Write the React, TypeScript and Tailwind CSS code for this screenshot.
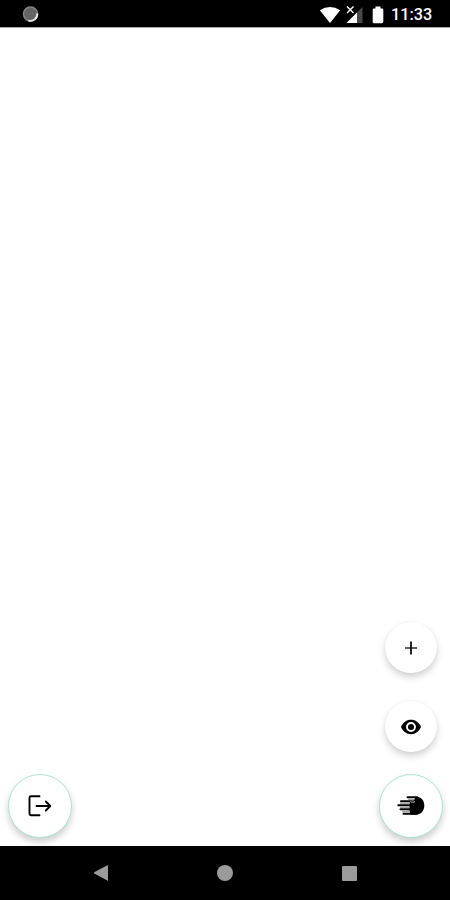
import type { ReactNode } from 'react';

function StatusBar() {
  return (
    <header className="flex h-[27px] shrink-0 items-center justify-between bg-black pr-[17px] pl-[22px]">
      <svg className="mt-[2px] h-[17px] w-[17px]" viewBox="0 0 17 17" aria-hidden="true">
        <circle cx="8.5" cy="8" r="7" fill="#646464" stroke="#858585" strokeWidth="1.5" />
        <path d="M15.3 7.5a7 7 0 0 1-8.8 7.2" fill="none" stroke="#ededed" strokeWidth="1.8" />
      </svg>
      <div className="mt-[2px] flex items-center text-white">
        <svg className="h-[18px] w-[22px]" viewBox="0 0 22 18" aria-hidden="true">
          <path d="M.8 4.3Q11-2.3 21.2 4.3L11 17Z" fill="currentColor" />
        </svg>
        <svg className="ml-[5px] h-[18px] w-[17px]" viewBox="0 0 17 18" aria-hidden="true">
          <path d="M.5 17 16.5 1v16Z" fill="#484848" />
          <path d="M.5 17 11 6.5V17Z" fill="currentColor" />
          <path d="m1 .5 6.5 6.5M7.5.5 1 7" stroke="currentColor" strokeWidth="1.4" />
        </svg>
        <svg className="ml-[9px] h-[18px] w-[12px]" viewBox="0 0 12 18" aria-hidden="true">
          <path d="M3.5.5h5v2H10a1.3 1.3 0 0 1 1.3 1.3v12A1.3 1.3 0 0 1 10 17.2H2a1.3 1.3 0 0 1-1.3-1.3v-12A1.3 1.3 0 0 1 2 2.5h1.5Z" fill="currentColor" />
        </svg>
        <span className="ml-[7px] w-[42px] whitespace-nowrap font-['Roboto',sans-serif] text-[16.25px] leading-[20px] font-medium">
          11:33
        </span>
      </div>
    </header>
  );
}

function SmallButton({ label, children }: { label: string; children: ReactNode }) {
  return (
    <button
      aria-label={label}
      className="flex h-[51px] w-[52px] items-center justify-center rounded-full bg-white shadow-[0_4px_7px_rgba(0,0,0,0.18),0_0_2px_rgba(0,0,0,0.06)]"
    >
      {children}
    </button>
  );
}

function LargeButton({ label, children }: { label: string; children: ReactNode }) {
  return (
    <button
      aria-label={label}
      className="flex h-[64px] w-[64px] items-center justify-center rounded-full border border-[#aee5d5] bg-white shadow-[0_4px_7px_rgba(0,0,0,0.2)]"
    >
      {children}
    </button>
  );
}

function HandIcon() {
  return (
    <svg className="h-[20px] w-[28px]" viewBox="0 0 28 20" aria-hidden="true">
      <path d="M12.5 6.5 17 4l2-3.2c4.8-.4 8.3 3.7 8.3 8.7 0 5.5-3.5 9.3-8.5 9.3H14l-1.5-3.2Z" />
      <path
        d="M10.5 1.3H20M4 5.2h11M1.3 9.2h13M3.5 13.2h12M6.5 17.8h13"
        fill="none"
        stroke="black"
        strokeWidth="2"
        strokeLinecap="round"
      />
      <path d="M11 3.2h6M3 7.2h10M3 11.2h9M5 15.4h7.5" stroke="#a6a6a6" strokeWidth="1.6" />
      <path d="M13.5 5.6c1.5.8 3 .9 4.5.1" fill="none" stroke="#d0d0d0" strokeWidth="1" />
    </svg>
  );
}

export default function App() {
  return (
    <div className="flex h-[900px] w-[450px] flex-col overflow-hidden bg-white">
      <StatusBar />
      <main className="flex flex-1 items-end justify-between border-t border-[#a6a6a6] pr-[7px] pb-[8px] pl-[8px]">
        <LargeButton label="Exit">
          <svg
            className="h-[24px] w-[26px]"
            viewBox="0 0 26 24"
            fill="none"
            stroke="black"
            strokeWidth="1.9"
            strokeLinecap="round"
            strokeLinejoin="round"
            aria-hidden="true"
          >
            <path d="M12.5 2.3H4Q2.5 2.3 2.5 3.8v16q0 1.5 1.5 1.5h8.5M9.5 12h13.5M18.8 7.5l4.5 4.5-4.5 4.5" />
          </svg>
        </LargeButton>
        <div className="flex flex-col items-center">
          <SmallButton label="Add">
            <svg className="h-[14px] w-[14px]" viewBox="0 0 14 14" aria-hidden="true">
              <path d="M1 7h12" stroke="#444" strokeWidth="1.7" />
              <path d="M7 .5v13" stroke="black" strokeWidth="1.7" />
            </svg>
          </SmallButton>
          <div className="mt-[28px] mb-[22px]">
            <SmallButton label="Show">
              <svg className="h-[16px] w-[22px]" viewBox="0 0 22 16" aria-hidden="true">
                <path d="M1 8C3 3.5 6.5.8 11 .8S19 3.5 21 8c-2 4.5-5.5 7.2-10 7.2S3 12.5 1 8Z" />
                <circle cx="11" cy="8" r="4" fill="none" stroke="white" strokeWidth="1.9" />
              </svg>
            </SmallButton>
          </div>
          <LargeButton label="Wave">
            <HandIcon />
          </LargeButton>
        </div>
      </main>
      <nav className="flex h-[54px] shrink-0 items-center justify-between bg-black pr-[93px] pl-[93px] text-[#9b9b9b]">
        <svg className="h-[16px] w-[16px]" viewBox="0 0 16 16" aria-label="Back">
          <path d="M1.2 7.2 14.3.3q.7-.3.7.5v14.4q0 .8-.7.4L1.2 8.5Q0 7.9 1.2 7.2Z" fill="currentColor" />
        </svg>
        <div className="mr-px h-[16px] w-[16px] rounded-full bg-[#9b9b9b]" />
        <div className="h-[15px] w-[15px] rounded-[1px] bg-[#9b9b9b]" />
      </nav>
    </div>
  );
}
